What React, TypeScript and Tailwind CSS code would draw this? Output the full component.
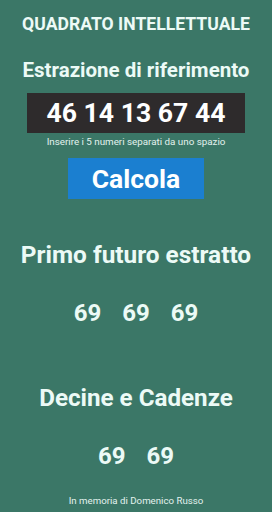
import React from 'react';

const App: React.FC = () => {
  const first = [69, 69, 69];
  const decine = [69, 69];

  return (
    <div
      className="w-[272px] h-[512px] bg-[#3b7767] text-[#ecfaf6] flex flex-col items-center overflow-hidden"
      style={{ fontFamily: 'Roboto, "Liberation Sans", sans-serif' }}
    >
      <h1 className="mt-[13px] text-[17.6px] leading-[22px] font-bold whitespace-nowrap">QUADRATO INTELLETTUALE</h1>

      <h2 className="mt-[22px] text-[20.5px] leading-[26px] font-bold whitespace-nowrap">Estrazione di riferimento</h2>

      {/* Input box */}
      <div className="mt-[10px] w-[218px] h-[40px] bg-[#2e2b2c] flex items-center justify-center">
        <span className="text-[26.6px] font-bold text-white">46 14 13 67 44</span>
      </div>
      <p className="mt-[2px] text-[9.8px] leading-[14px] text-[#e3f2ee] whitespace-nowrap">Inserire i 5 numeri separati da uno spazio</p>

      <button className="mt-[9px] w-[136px] h-[41px] bg-[#1b7fd0] text-white text-[26.5px] font-bold flex items-center justify-center">
        Calcola
      </button>

      <h2 className="mt-[42px] text-[24.4px] leading-[28px] font-bold whitespace-nowrap">Primo futuro estratto</h2>
      <div className="mt-[30px] flex gap-[21px] text-[24px] leading-[28px] font-bold">
        {first.map((n, i) => (
          <span key={i}>{n}</span>
        ))}
      </div>

      <h2 className="mt-[57px] text-[24.2px] leading-[28px] font-bold whitespace-nowrap">Decine e Cadenze</h2>
      <div className="mt-[30px] flex gap-[21px] text-[24px] leading-[28px] font-bold">
        {decine.map((n, i) => (
          <span key={i}>{n}</span>
        ))}
      </div>

      <p className="mt-[24px] text-[9.7px] leading-[14px] text-[#e3f2ee] whitespace-nowrap">In memoria di Domenico Russo</p>
    </div>
  );
};

export default App;
